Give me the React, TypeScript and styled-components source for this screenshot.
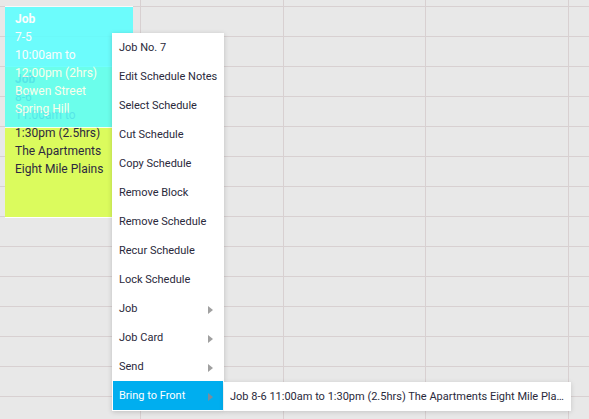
import styled, { createGlobalStyle } from "styled-components";

const GlobalStyle = createGlobalStyle`
  html, body {
    margin: 0;
    padding: 0;
    background: #e8e8e8;
    font-family: Roboto, "Liberation Sans", Arial, sans-serif;
  }
  * {
    box-sizing: border-box;
  }
`;

const SLOT = 30;
const DAY_START = 9.5; // grid line at top of the page sits half an hour in

const Board = styled.div`
  position: relative;
  width: 100vw;
  height: 100vh;
  overflow: hidden;
  background: #e8e8e8;
`;

const Grid = styled.div`
  display: grid;
  grid-template-columns: repeat(5, 142.75px);
  grid-auto-rows: ${SLOT}px;
  margin: -23px 0 0 -2px;
`;

const Cell = styled.div`
  border-right: 1px solid #d8d0d1;
  border-bottom: 1px solid #d8d0d1;
`;

const Block = styled.div<{ $bg: string; $light?: boolean; $fade?: number }>`
  position: absolute;
  left: 5px;
  width: 128px;
  padding: 3px 10px 0;
  background: ${(p) => p.$bg};
  border-top: 1px solid #ffffff;
  border-bottom: 1px solid #ffffff;
  color: ${(p) => (p.$light ? "#ffffff" : "#2c2940")};
  font-size: 12px;
  line-height: 18px;
  opacity: ${(p) => p.$fade ?? 1};
  white-space: nowrap;
  overflow: hidden;
`;

const BlockTitle = styled.div`
  font-weight: 700;
`;

const Menu = styled.ul`
  position: absolute;
  left: 112px;
  top: 33px;
  width: 112px;
  margin: 0;
  padding: 0 1px 1px;
  list-style: none;
  background: #ffffff;
  box-shadow: 0 1px 5px rgba(0, 0, 0, 0.18);
`;

const Item = styled.li<{ $active?: boolean }>`
  position: relative;
  display: flex;
  align-items: center;
  justify-content: space-between;
  height: 29px;
  padding: 0 10px 0 6px;
  font-size: 11px;
  color: ${(p) => (p.$active ? "#ffffff" : "#2a293b")};
  background: ${(p) => (p.$active ? "#00aeef" : "transparent")};
  white-space: nowrap;
`;

const Arrow = styled.span<{ $active?: boolean }>`
  width: 0;
  height: 0;
  border-top: 4px solid transparent;
  border-bottom: 4px solid transparent;
  border-left: 5px solid ${(p) => (p.$active ? "#7d8c99" : "#a0a0a0")};
  margin-top: 2px;
`;

const SubMenu = styled.div`
  position: absolute;
  left: 111px;
  top: 1px;
  width: 347px;
  height: 29px;
  display: flex;
  align-items: center;
  padding: 0 5px 0 6px;
  background: #ffffff;
  box-shadow: 0 1px 5px rgba(0, 0, 0, 0.15);
  font-size: 11px;
  color: #2a293b;
`;

const SubText = styled.span`
  overflow: hidden;
  text-overflow: ellipsis;
  white-space: nowrap;
`;

const jobs = [
  {
    id: "8-6",
    from: 11,
    to: 13.5,
    lines: ["11:00am to", "1:30pm (2.5hrs)", "The Apartments", "Eight Mile Plains"],
    bg: "#dbfb5d",
    light: false,
    fade: 1,
  },
  {
    id: "7-5",
    from: 10,
    to: 12,
    lines: ["10:00am to", "12:00pm (2hrs)", "Bowen Street", "Spring Hill"],
    bg: "#5cffff",
    light: true,
    fade: 0.88,
  },
];

const menuItems = [
  { label: "Job No. 7" },
  { label: "Edit Schedule Notes" },
  { label: "Select Schedule" },
  { label: "Cut Schedule" },
  { label: "Copy Schedule" },
  { label: "Remove Block" },
  { label: "Remove Schedule" },
  { label: "Recur Schedule" },
  { label: "Lock Schedule" },
  { label: "Job", sub: true },
  { label: "Job Card", sub: true },
  { label: "Send", sub: true },
  { label: "Bring to Front", sub: true, active: true },
];

export default function App() {
  return (
    <>
      <GlobalStyle />
      <Board>
        <Grid>
          {Array.from({ length: 75 }).map((_, i) => (
            <Cell key={i} />
          ))}
        </Grid>

        {jobs.map((job) => (
          <Block
            key={job.id}
            $bg={job.bg}
            $light={job.light}
            $fade={job.fade}
            style={{
              top: 6 + (job.from - DAY_START - 0.5) * 2 * SLOT,
              height: (job.to - job.from) * 2 * SLOT + 2,
            }}
          >
            <BlockTitle>Job</BlockTitle>
            <div>{job.id}</div>
            {job.lines.map((l) => (
              <div key={l}>{l}</div>
            ))}
          </Block>
        ))}

        <Menu>
          {menuItems.map((m) => (
            <Item key={m.label} $active={m.active}>
              <span>{m.label}</span>
              {m.sub && <Arrow $active={m.active} />}
              {m.active && (
                <SubMenu>
                  <SubText>
                    Job 8-6 11:00am to 1:30pm (2.5hrs) The Apartments Eight Mile Plains
                  </SubText>
                </SubMenu>
              )}
            </Item>
          ))}
        </Menu>
      </Board>
    </>
  );
}
